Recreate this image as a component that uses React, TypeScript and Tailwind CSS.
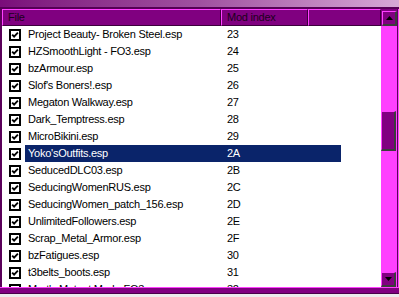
import React from 'react';

const mods: [string, string][] = [
  ['Project Beauty- Broken Steel.esp', '23'],
  ['HZSmoothLight - FO3.esp', '24'],
  ['bzArmour.esp', '25'],
  ["Slof's Boners!.esp", '26'],
  ['Megaton Walkway.esp', '27'],
  ['Dark_Temptress.esp', '28'],
  ['MicroBikini.esp', '29'],
  ["Yoko'sOutfits.esp", '2A'],
  ['SeducedDLC03.esp', '2B'],
  ['SeducingWomenRUS.esp', '2C'],
  ['SeducingWomen_patch_156.esp', '2D'],
  ['UnlimitedFollowers.esp', '2E'],
  ['Scrap_Metal_Armor.esp', '2F'],
  ['bzFatigues.esp', '30'],
  ['t3belts_boots.esp', '31'],
  ["Mart's Mutant Mod - FO3.esp", '32'],
];

const SELECTED = 7;

function CheckBox() {
  return (
    <svg width="12" height="12" viewBox="0 0 12 12" className="shrink-0">
      <rect x="1" y="1" width="10" height="10" fill="#fff" stroke="#000" strokeWidth="2" />
      <path d="M3.2 5.6 L5.1 7.6 L8.9 3.6" fill="none" stroke="#000" strokeWidth="1.9" />
    </svg>
  );
}

function HeaderCell({ label, width }: { label?: string; width: string }) {
  return (
    <div
      className={`${width} h-full flex items-center pl-[5px] bg-[#800080] border-t border-l border-[#ff40ff] border-b-[#3c003c] border-r-[#3c003c] border-b border-r text-[#1c001c]`}
    >
      {label}
    </div>
  );
}

function ScrollButton({ up }: { up?: boolean }) {
  return (
    <div className="w-[15px] h-[15px] flex items-center justify-center bg-[#800080] border-t border-l border-[#ff40ff] border-r-[#3c3c3c] border-b-[#3c3c3c] border-r-2 border-b-2">
      <svg width="7" height="4" viewBox="0 0 7 4">
        {up ? <path d="M0 4 L3.5 0 L7 4 Z" fill="#000" /> : <path d="M0 0 L3.5 4 L7 0 Z" fill="#000" />}
      </svg>
    </div>
  );
}

export default function App() {
  return (
    <div className="w-[399px] h-[297px] flex flex-col overflow-hidden bg-[#ececec] font-['Liberation_Sans',Arial,sans-serif] text-[11px] tracking-[-0.25px]">
      {/* title strip */}
      <div className="h-[7px] shrink-0 bg-gradient-to-r from-[#7a0c7a] via-[#a050a0] to-[#d6a8d6]" />
      <div className="h-[2px] shrink-0 bg-[#560056]" />

      <div className="h-[278px] shrink-0 flex">
        <div className="w-[2px] bg-[#5a005a]" />

        {/* list */}
        <div className="w-[379px] flex flex-col bg-white">
          <div className="h-[17px] shrink-0 flex">
            <HeaderCell label="File" width="w-[219px]" />
            <HeaderCell label="Mod index" width="w-[87px]" />
            <HeaderCell width="w-[73px]" />
          </div>
          <div className="flex-1 overflow-hidden">
            {mods.map(([name, idx], i) => (
              <div key={name} className="h-[17px] flex items-center text-black">
                <div className="w-[23px] pl-[7px] flex items-center">
                  <CheckBox />
                </div>
                <div
                  className={`w-[316px] h-full flex items-center ${
                    i === SELECTED ? 'bg-[#0a246a] text-white' : ''
                  }`}
                >
                  <span className="w-[196px] pl-[3px] whitespace-nowrap">{name}</span>
                  <span className="w-[87px] pl-[6px]">{idx}</span>
                </div>
              </div>
            ))}
          </div>
        </div>

        {/* scrollbar */}
        <div className="w-[16px] flex flex-col bg-[#ff40ff]">
          <div className="h-[17px] shrink-0 bg-[#800080] pt-[2px] pl-[1px]">
            <ScrollButton up />
          </div>
          <div className="flex-1">
            <div className="mt-[85px] w-[15px] h-[40px] bg-[#800080] border-t border-l border-[#ff40ff] border-r-2 border-b-2 border-r-[#3c3c3c] border-b-[#3c3c3c]" />
          </div>
          <div className="h-[15px] shrink-0">
            <ScrollButton />
          </div>
        </div>

        <div className="w-[1px] bg-[#5a005a]" />
        <div className="w-[1px] bg-[#ff40ff]" />
      </div>

      {/* bottom frame */}
      <div className="h-[1px] shrink-0 bg-[#ff40ff]" />
      <div className="h-[6px] shrink-0 bg-[#800080] border-b border-[#4a004a]" />
      <div className="flex-1 bg-[#ececec]" />
    </div>
  );
}
